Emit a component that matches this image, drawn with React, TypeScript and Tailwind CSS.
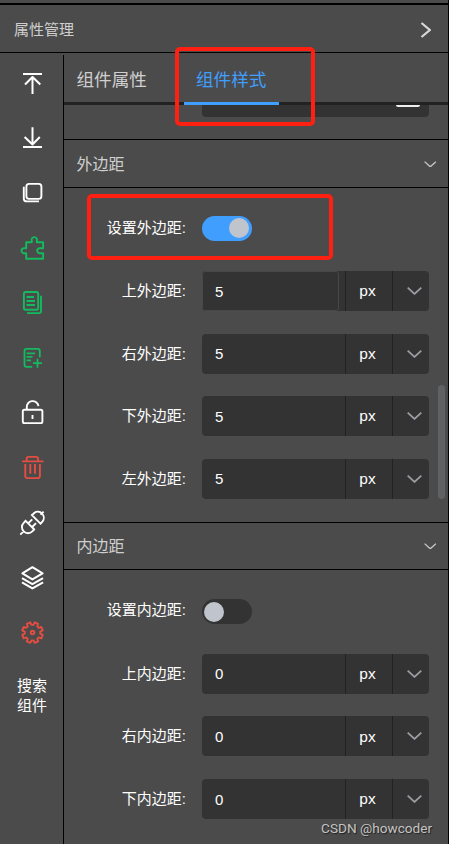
import React from 'react';

const GREEN = '#13ba5f';
const RED = '#e54d42';

function gearPath(cx: number, cy: number) {
  const points: string[] = [];
  for (let i = 0; i < 8; i++) {
    const base = (i * 45 + 22.5) * (Math.PI / 180);
    const corners: [number, number][] = [[-0.26, 7.8], [-0.18, 10.5], [0.18, 10.5], [0.26, 7.8]];
    corners.forEach(([da, r]) => {
      points.push(`${(cx + Math.cos(base + da) * r).toFixed(2)} ${(cy + Math.sin(base + da) * r).toFixed(2)}`);
    });
  }
  return `M${points.join('L')}Z`;
}

const tools: { name: string; color: string; width: number; shape: React.ReactNode }[] = [
  { name: 'top', color: '#fff', width: 2, shape: <path d="M23 19h19M32.5 39V22M25 29.5l7.5-7.5 7.8 7.5" /> },
  { name: 'bottom', color: '#fff', width: 2, shape: <path d="M23 37h19M32.5 17.3v17M24.6 27l7.9 7.5 7.3-7.5" /> },
  {
    name: 'copy', color: '#fff', width: 1.9,
    shape: <><rect x="26.4" y="18.9" width="15" height="15" rx="2.6" /><path d="M23.8 21.8v11.6a3 3 0 0 0 3 3H39" /></>,
  },
  {
    name: 'plugin', color: GREEN, width: 1.9,
    shape: <path d="M26.2 22.2h5.6v-1.4a2.7 2.7 0 1 1 5 0v1.4h6.3v6h-2.6a2.6 2.6 0 1 0 0 5h2.6v5.6H26.2v-5.6h-1.4a2.6 2.6 0 1 1 0-5h1.4z" />,
  },
  {
    name: 'document', color: GREEN, width: 1.9,
    shape: <><rect x="23.9" y="17" width="14.3" height="17.8" rx="1.8" /><path d="M26.5 22H34M26.5 26H35M26.5 30H35M41 20.7v15.6a1.8 1.8 0 0 1-1.8 1.8H27" /></>,
  },
  {
    name: 'add', color: GREEN, width: 1.8,
    shape: <path d="M39.8 27.2v-6.4a2 2 0 0 0-2-2H26.5a2 2 0 0 0-2 2v14a2 2 0 0 0 2 2h5.7M26.5 23.4H35M26.5 26.9h6M26.5 30.4H31M37.5 28.7v9M33 33.2h9" />,
  },
  {
    name: 'unlock', color: '#fff', width: 1.9,
    shape: <><rect x="22.8" y="24.7" width="19.6" height="13.4" rx="1.6" /><path d="M26.8 24.5v-1.7a5.8 5.8 0 0 1 11.7-1.6M32.5 30v4" /></>,
  },
  {
    name: 'delete', color: RED, width: 1.9,
    shape: <path d="M22 21.4h21.5M26.7 21v-2.3a1.8 1.8 0 0 1 1.8-1.8h7.8a1.8 1.8 0 0 1 1.8 1.8V21M25.3 24v12.3a1.8 1.8 0 0 0 1.8 1.8h11a1.8 1.8 0 0 0 1.8-1.8V24M30.3 24v9.8M35 24v9.8" />,
  },
  {
    name: 'link', color: '#fff', width: 1.9,
    shape: <path d="M20.3 39.6l3.3-3.3M25.7 25.8l-2 2a6 6 0 0 0 8.6 8.6l2-2M24.9 25.1l9.9 9.9M43.6 16.6l-3.1 3.1M32.2 20.1l2-2.1a6 6 0 0 1 8.4 8.4l-2 2.1M31.2 19.3l10 10M28.4 28.2l3.8-3.8M32.2 32l3.8-3.8" />,
  },
  {
    name: 'layers', color: '#fff', width: 2,
    shape: <path d="M32.4 17.2l10.2 6.2-10.2 6-10-6zM22 28.1l10.4 6 10.7-6M22 32.4l10.4 6 10.7-6" />,
  },
  {
    name: 'settings', color: RED, width: 1.9,
    shape: <><path d={gearPath(32.5, 27.6)} /><circle cx="32.5" cy="27.6" r="1.8" /></>,
  },
];

function Chevron({ className, size, width }: { className: string; size: number; width: number }) {
  return (
    <svg className={className} width={size} height={size / 2 + 0.5} viewBox="0 0 15 8" fill="none" stroke="currentColor" strokeWidth={width}>
      <path d="M.7.7l6.8 6.2L14.3.7" />
    </svg>
  );
}

function Section({ title, compact }: { title: string; compact?: boolean }) {
  return (
    <div className={`flex shrink-0 items-center justify-between border-y border-black pl-[12.5px] pr-3 ${compact ? 'h-12' : 'h-[49px] pt-px'}`}>
      <h2 className="pt-px text-base text-[#cfcfcf]">{title}</h2>
      <Chevron className="text-[#c8c8c8]" size={12.5} width={1.6} />
    </div>
  );
}

function Label({ children }: { children: React.ReactNode }) {
  return <span className="w-[122px] shrink-0 whitespace-nowrap text-right text-[15px] leading-10 text-white">{children}</span>;
}

function SwitchRow({ label, on }: { label: string; on?: boolean }) {
  return (
    <div className="-mt-px flex h-[41px] items-start">
      <Label>{label}</Label>
      <button
        className={`ml-4 flex h-[25px] w-[50px] items-center rounded-full ${on ? 'mt-2 justify-end bg-[#409eff] pr-[3px]' : 'mt-[9px] justify-start bg-[#333] pl-0.5'}`}
      >
        <span className="size-5 rounded-full bg-[#c0c4cc]" />
      </button>
    </div>
  );
}

function Field({ label, value, active }: { label: string; value: string; active?: boolean }) {
  return (
    <div className="flex h-10 items-center">
      <Label>{label}</Label>
      <div className="ml-4 flex h-10 w-[227px] overflow-hidden rounded bg-[#333] text-[15px] text-white">
        <div className="flex w-36 border-r border-[#222]">
          {active ? (
            <div className="flex w-[137px] items-center rounded-[3px] border border-[#484848] pl-3 pt-0.5">{value}</div>
          ) : (
            <div className="flex items-center pl-[13px] pt-0.5">{value}</div>
          )}
        </div>
        <div className="flex w-[47px] items-center justify-center border-r border-[#222] pr-[3px] text-[15.5px]">px</div>
        <div className="flex flex-1 items-center justify-center pl-1.5">
          <Chevron className="text-[#9a9da3]" size={15} width={1.8} />
        </div>
      </div>
    </div>
  );
}

export default function App() {
  return (
    <div className="relative flex h-[844px] w-[449px] flex-col overflow-hidden border-r border-black bg-[#4b4b4b] pt-[3px] font-['Liberation_Sans','Noto_Sans_CJK_SC',sans-serif]">
      <header className="flex h-[50px] shrink-0 items-center justify-between border-b border-t-2 border-black pl-3.5 pr-[17px]">
        <h1 className="pt-[3px] text-[15px] text-[#cfcfcf]">属性管理</h1>
        <svg className="mt-0.5" width="11" height="16" viewBox="0 0 11 16" fill="none" stroke="#d8d8d8" strokeWidth="2.2">
          <path d="M1.5 1l8.3 7-8.3 7" />
        </svg>
      </header>

      <div className="flex min-h-0 flex-1">
        <aside className="mt-0.5 flex w-16 shrink-0 flex-col border-r border-black">
          {tools.map((tool) => (
            <svg
              key={tool.name}
              className="h-[55px] w-16 shrink-0"
              viewBox="0 0 64 55"
              fill="none"
              stroke={tool.color}
              strokeWidth={tool.width}
              strokeLinejoin="round"
            >
              {tool.shape}
            </svg>
          ))}
          <div className="pl-[17px] pt-4 text-[15px] leading-5 text-white">
            搜索
            <br />
            组件
          </div>
        </aside>

        <main className="flex min-w-0 flex-1 flex-col">
          <nav className="flex h-[52px] shrink-0 border-b-[3px] border-[#222] pl-[12.5px] text-[17.6px] leading-[54px] text-[#d0d0d0]">
            <span className="w-[107.5px]">组件属性</span>
            <span className="-mb-[3px] h-[52px] w-[95px] border-b-[3px] border-[#409eff] pl-3 text-[#409eff]">组件样式</span>
          </nav>

          <div className="flex h-[34px] shrink-0 items-start pl-[138px]">
            <div className="flex h-3 w-[227px] justify-end rounded-b bg-[#333] pr-[9px]">
              <span className="h-0.5 w-6 rounded-b-sm bg-[#eee]" />
            </div>
          </div>

          <Section title="外边距" />
          <div className="flex h-[334px] shrink-0 flex-col gap-[22.5px] pt-[20.5px]">
            <SwitchRow label="设置外边距:" on />
            <Field label="上外边距:" value="5" active />
            <Field label="右外边距:" value="5" />
            <Field label="下外边距:" value="5" />
            <Field label="左外边距:" value="5" />
          </div>

          <Section title="内边距" compact />
          <div className="flex min-h-0 flex-1 flex-col gap-[22.6px] pt-[21px]">
            <SwitchRow label="设置内边距:" />
            <Field label="上内边距:" value="0" />
            <Field label="右内边距:" value="0" />
            <Field label="下内边距:" value="0" />
          </div>
        </main>
      </div>

      <div className="absolute left-[438px] top-[385px] h-[114px] w-[7px] rounded-full bg-[#606163]" />
      <div className="absolute left-[175px] top-[47px] h-[79px] w-[140px] rounded-[5px] border-4 border-[#ff2011]" />
      <div className="absolute left-[87px] top-[194px] h-[66px] w-[246px] rounded-[5px] border-4 border-[#ff2011]" />
      <div className="absolute bottom-2 right-4 whitespace-nowrap font-['Roboto',sans-serif] text-[13.6px] leading-4 text-[#c4c4c4] [text-shadow:1px_1px_1px_#222]">
        CSDN @howcoder
      </div>
    </div>
  );
}
